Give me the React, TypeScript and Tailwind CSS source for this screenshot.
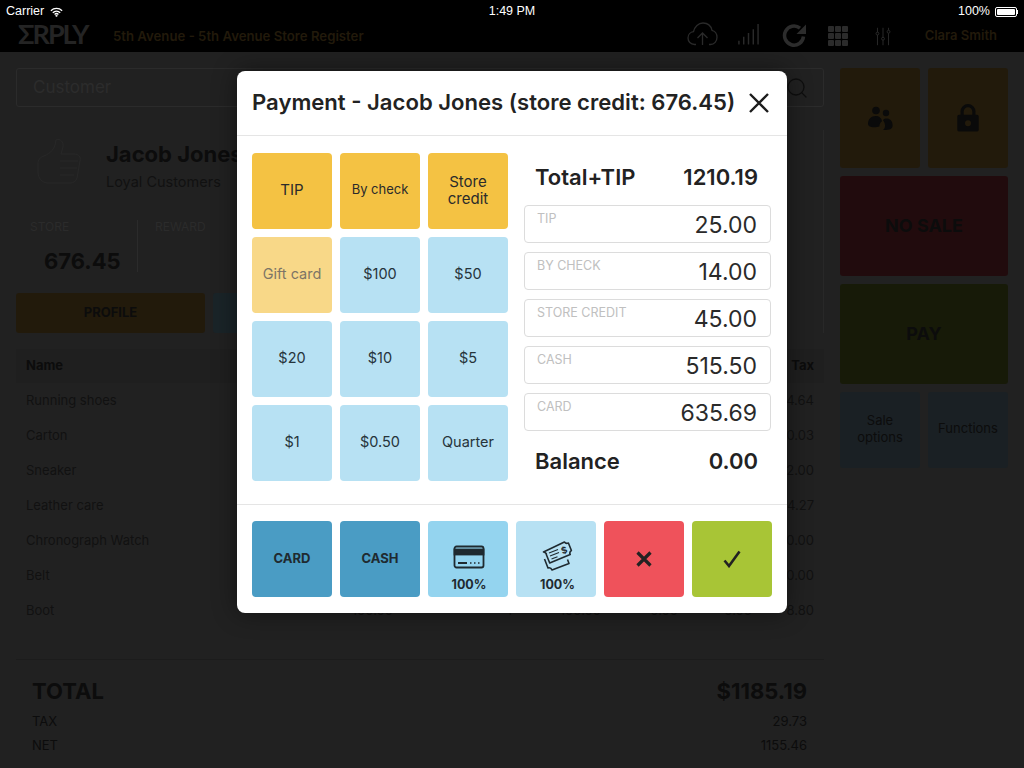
import React from "react";
import { Search } from "lucide-react";

const rows: string[][] = [
  ["Running shoes", "", "", "", "", "", "4.64"],
  ["Carton", "", "", "", "", "", "0.03"],
  ["Sneaker", "", "", "", "", "", "2.00"],
  ["Leather care", "", "", "", "", "", "4.27"],
  ["Chronograph Watch", "", "", "", "", "", "0.00"],
  ["Belt", "", "", "", "", "", "0.00"],
  ["Boot", "100.00", "1", "100.00", "0.00", "0.00", "8.80"],
];

const payButtons: [string, string][] = [
  ["TIP", "bg-[#f4c243] text-[#2b2b2b] text-[15px]"],
  ["By check", "bg-[#f4c243] text-[#2b2b2b] text-[13px]"],
  ["Store credit", "bg-[#f4c243] text-[#2b2b2b] text-[15px] leading-[17px] px-4"],
  ["Gift card", "bg-[#f8d888] text-[#7d7566] text-[14.500px]"],
  ["$100", "bg-[#b7e1f3] text-[#26343b] text-[14.500px]"],
  ["$50", "bg-[#b7e1f3] text-[#26343b] text-[14.500px]"],
  ["$20", "bg-[#b7e1f3] text-[#26343b] text-[14.500px]"],
  ["$10", "bg-[#b7e1f3] text-[#26343b] text-[14.500px]"],
  ["$5", "bg-[#b7e1f3] text-[#26343b] text-[14.500px]"],
  ["$1", "bg-[#b7e1f3] text-[#26343b] text-[14.500px]"],
  ["$0.50", "bg-[#b7e1f3] text-[#26343b] text-[14.500px]"],
  ["Quarter", "bg-[#b7e1f3] text-[#26343b] text-[14.500px]"],
];

const fields = [
  ["TIP", "25.00"],
  ["BY CHECK", "14.00"],
  ["STORE CREDIT", "45.00"],
  ["CASH", "515.50"],
  ["CARD", "635.69"],
];

function CardIcon() {
  return (
    <svg width="32" height="24" viewBox="0 0 32 24" fill="none" stroke="#1f2a30" strokeWidth="1.800">
      <rect x="1.500" y="1.500" width="29" height="21" rx="2" />
      <rect x="1.500" y="4.500" width="29" height="5" fill="#1f2a30" />
      <path d="M5 18h9" strokeWidth="2" />
      <path d="M17 18h1.500M21 18h1.500M25 18h1.500" strokeWidth="1.600" />
    </svg>
  );
}

function TicketIcon() {
  return (
    <svg width="32" height="32" viewBox="0 0 32 32" fill="none" stroke="#1f2a30" strokeWidth="1.600" strokeLinejoin="round">
      <path d="M2.500 18l3.500 9c2-.6 3.200 0 4 2l17-6.500-1.500-4" />
      <path d="M1.500 11c2 .2 3 1.200 3 3l3.200 8 20.500-8.500c-.8-1.700-.4-3 1.200-4l-3-7.500c-1.800.8-3 .4-4-1z" fill="#b7e1f3" />
      <path d="M7 12l9-3.500M8 15l9-3.500M9.500 18l6-2.300" strokeWidth="1.100" />
      <text x="19.500" y="12.500" fontSize="9" fontWeight="700" fill="#1f2a30" stroke="none" fontFamily="Inter, sans-serif" transform="rotate(-20 22 10)">$</text>
    </svg>
  );
}

function People() {
  return (
    <svg width="28" height="28" viewBox="0 0 28 28" fill="#0a0a0a">
      <circle cx="10" cy="6.500" r="3.800" />
      <circle cx="20" cy="9" r="3.200" />
      <path d="M2 20c0-5 3.200-8 7.600-8 3.600 0 6 2 6.400 5.200-1.800 1.200-2.600 3-2.600 5.200-2.500 1-8 1-9.600 0C2.600 21.800 2 21 2 20z" />
      <path d="M17 26c2-1.500 2.400-4 1.800-6.300-.4-1.600-1-2.700-1.800-3.500 1-1.200 2.200-1.600 3.600-1.600 3.400 0 6 2.600 6 6.800 0 3-2 4.600-9.600 4.600z" />
    </svg>
  );
}

function Lock() {
  return (
    <svg width="28" height="30" viewBox="0 0 26 28" fill="#0a0a0a">
      <path fillRule="evenodd" d="M6 11V8a7 7 0 0 1 14 0v3h1.500a1.500 1.500 0 0 1 1.500 1.500V25a1.500 1.500 0 0 1-1.500 1.500h-17A1.500 1.500 0 0 1 3 25V12.500A1.500 1.500 0 0 1 4.500 11zm3 0h8V8a4 4 0 0 0-8 0zm4 5a2.800 2.800 0 1 0 0 5.600 2.800 2.800 0 0 0 0-5.600z" />
    </svg>
  );
}

export default function App() {
  return (
    <div className="relative w-[1024px] h-[768px] overflow-hidden bg-[#212121] font-['Inter',sans-serif] text-[#0c0c0c]">
      <header className="bg-black h-[52px] flex flex-col">
        <div className="h-[22px] shrink-0 flex items-center justify-between px-[6px] pt-[1px] text-white text-[12.500px] font-['Liberation_Sans',sans-serif]">
          <div className="w-[200px] flex items-center gap-[6px]">
            <span>Carrier</span>
            <svg width="13" height="10" viewBox="0 0 15 11" fill="none" stroke="#fff" strokeWidth="1.500">
              <path d="M1 4a9.500 9.500 0 0 1 13 0M3.200 6.300a6.300 6.300 0 0 1 8.600 0M5.300 8.300a3.200 3.200 0 0 1 4.400 0" />
              <circle cx="7.500" cy="9.800" r="0.500" fill="#fff" />
            </svg>
          </div>
          <span>1:49 PM</span>
          <div className="w-[200px] flex items-center justify-end gap-[5px]">
            <span>100%</span>
            <div className="flex items-center">
              <div className="w-[22px] h-[10px] border border-white rounded-[2px] p-[1px]">
                <div className="w-full h-full bg-white rounded-[1px]" />
              </div>
              <div className="w-[1px] h-[4px] bg-white" />
            </div>
          </div>
        </div>
        <div className="flex-1 flex items-center pl-[18px] pr-[27px] min-h-0">
          <span className="w-[95px] text-[#242424] text-[27px] leading-none tracking-[-2px] mt-[-7px] font-['Lato',sans-serif] font-bold">ΣRPLY</span>
          <span className="text-[#221a0b] text-[13.200px] font-semibold">5th Avenue - 5th Avenue Store Register</span>
          <div className="ml-auto flex items-center mt-[-6px]">
            <svg width="31" height="24" viewBox="0 0 31 24" fill="none" stroke="#2a2a2a" strokeWidth="1.300" className="mr-[19px]">
              <path d="M9 22.500H7.500C3.500 22.500 1 19.500 1 16c0-3.500 2.500-6 5.500-6.300C7.500 4.500 11.500 1 16 1c4.500 0 8 3 9 7.300 2.800.6 5 3.500 5 7 0 4-2.700 7.200-6.500 7.200H22" />
              <path d="M15.500 23V11M10.500 16l5-5 5 5" />
            </svg>
            <svg width="23" height="22" viewBox="0 0 24 23" stroke="#2a2a2a" strokeWidth="1.500" className="mr-[22px]">
              <path d="M2 22.500v-4M7 22.500v-8M12 22.500v-12M17 22.500v-16M22 22.500V1" />
            </svg>
            <svg width="26" height="26" viewBox="0 0 26 26" fill="none" stroke="#2c2c2c" strokeWidth="3.500" className="mt-[4px] mr-[20px]">
              <path d="M21.500 13.500A9.500 9.500 0 1 1 18 5.200" />
              <path d="M24 1.500V11h-9.500z" fill="#2c2c2c" stroke="none" />
            </svg>
            <div className="grid grid-cols-3 gap-[1px] w-[20px] mt-[4px] mr-[26px]">
              {Array.from({ length: 9 }).map((_, i) => (
                <div key={i} className="h-[6px] bg-[#2b2b2b] rounded-[1px]" />
              ))}
            </div>
            <svg width="18" height="19" viewBox="0 0 20 24" fill="none" stroke="#2a2a2a" strokeWidth="1.200" className="mt-[4px] mr-[33px]">
              <path d="M3 1v5.500M3 10v13M10 1v12M10 16.500V23M17 1v3M17 8v15" />
              <circle cx="3" cy="8.300" r="1.800" />
              <circle cx="10" cy="14.800" r="1.800" />
              <circle cx="17" cy="6" r="1.800" />
            </svg>
            <span className="text-[#221a0b] text-[13px] font-semibold mt-[3px]">Clara Smith</span>
          </div>
        </div>
      </header>

      <div className="flex gap-4 px-4 pt-4">
        <main className="w-[808px]">
          <div className="h-[39px] border border-[#2b2b2b] rounded-[3px] flex items-center justify-between pl-4 pr-[14px] text-[17px] text-[#2c2c2c]">
            <span className="mt-[1px]">Customer</span>
            <Search size={24} strokeWidth={1.300} color="#0e0e0e" />
          </div>

          <section className="relative mt-[23px] h-[203px] border-r border-[#282828]">
            <div className="flex pt-[8px] pl-[20px]">
              <svg width="48" height="48" viewBox="0 0 48 48" fill="none" stroke="#282828" strokeWidth="1">
                <path d="M2 26c0-4 2-7 6-8 7-3 11-7 12-16 4-2 8 2 7 7l-2 7h13c5 0 7 3 6 7l-3 17c-1 3-3 5-7 5H12C6 45 2 40 2 34z" />
                <path d="M24 23h18M24 30h17M24 37h14" />
              </svg>
              <div className="ml-[22px] mt-[2px]">
                <div className="text-[22px] font-bold leading-[28px]">Jacob Jones</div>
                <div className="text-[14.500px] leading-[20px] mt-[4px] text-[#111]">Loyal Customers</div>
              </div>
            </div>
            <div className="flex mt-[28px]">
              <div className="w-[122px] h-[52px] border-r border-[#2b2b2b] pl-[14px]">
                <div className="text-[12px] leading-[14px] text-[#2b2b2b]">STORE</div>
                <div className="text-[22px] font-bold leading-[30px] mt-[12px] ml-[14px]">676.45</div>
              </div>
              <div className="pl-[17px] text-[12px] leading-[14px] text-[#2b2b2b]">REWARD</div>
            </div>
            <div className="flex gap-2 mt-[21px]">
              <div className="w-[189px] h-[40px] rounded-[3px] bg-[#221a0b] flex items-center justify-center text-[13px] font-bold">PROFILE</div>
              <div className="w-[189px] h-[40px] rounded-[3px] bg-[#1a2428]" />
            </div>
          </section>

          <section className="mt-[16px]">
            <div className="h-[34px] px-[10px] flex items-center justify-between bg-[#1f1f1f] text-[13px] font-bold">
              <span>Name</span>
              <span>Tax</span>
            </div>
            {rows.map((r) => (
              <div key={r[0]} className="h-[35px] px-[10px] grid grid-cols-[150px_217px_119px_89px_77px_74px_62px] items-center text-right text-[13px] text-[#111]">
                {r.map((c, i) => (
                  <span key={i} className={i === 0 ? "text-left" : ""}>{c}</span>
                ))}
              </div>
            ))}
          </section>

          <section className="mt-[31px] border-t border-[#1c1c1c] pl-4 pr-[17px] pt-[17px]">
            <div className="flex justify-between text-[22px] font-bold leading-[28px]">
              <span>TOTAL</span>
              <span>$1185.19</span>
            </div>
            <div className="flex justify-between text-[13px] leading-[24px] mt-[4px]">
              <span>TAX</span>
              <span>29.73</span>
            </div>
            <div className="flex justify-between text-[13px] leading-[24px]">
              <span>NET</span>
              <span>1155.46</span>
            </div>
          </section>
        </main>

        <aside className="w-[168px] grid grid-cols-2 gap-2 content-start">
          <div className="h-[100px] rounded-[3px] bg-[#221a0b] flex items-center justify-center"><People /></div>
          <div className="h-[100px] rounded-[3px] bg-[#221a0b] flex items-center justify-center"><Lock /></div>
          <div className="col-span-2 h-[100px] pb-[2px] rounded-[3px] bg-[#210b0d] flex items-center justify-center text-[18px] font-bold">NO SALE</div>
          <div className="col-span-2 h-[100px] pb-[2px] rounded-[3px] bg-[#171a08] flex items-center justify-center text-[18px] font-bold">PAY</div>
          <div className="h-[76px] pb-[2px] rounded-[3px] bg-[#1a2024] flex items-center justify-center text-center text-[13px] leading-[17px] px-3">Sale options</div>
          <div className="h-[76px] pb-[2px] rounded-[3px] bg-[#1a2024] flex items-center justify-center text-[13px]">Functions</div>
        </aside>
      </div>

      <div className="absolute left-[237px] top-[71px] w-[550px] h-[542px] bg-white rounded-[8px] shadow-[0_0_24px_rgba(0,0,0,0.45)] text-[#222]">
        <div className="h-[65px] border-b border-[#e5e5e5] flex items-center justify-between pl-[15px] pr-[17px]">
          <span className="text-[22.100px] font-semibold whitespace-nowrap">Payment - Jacob Jones (store credit: 676.45)</span>
          <svg width="22" height="22" viewBox="0 0 22 22" stroke="#1c1c1c" strokeWidth="2.400">
            <path d="M2 2l18 18M20 2L2 20" />
          </svg>
        </div>
        <div className="h-[369px] border-b border-[#e5e5e5] flex pl-[15px] pt-[17px]">
          <div className="w-[256px] grid grid-cols-3 gap-2 auto-rows-[76px]">
            {payButtons.map(([t, cls]) => (
              <div key={t} className={`rounded-[4px] pb-[2px] flex items-center justify-center text-center ${cls}`}>{t}</div>
            ))}
          </div>
          <div className="w-[247px] ml-[16px]">
            <div className="h-[52px] pb-[4px] flex items-center justify-between pl-[11px] pr-[13px] text-[22px] font-semibold">
              <span>Total+TIP</span>
              <span>1210.19</span>
            </div>
            <div className="flex flex-col gap-[9px]">
              {fields.map(([l, v]) => (
                <div key={l} className="h-[38px] border border-[#dcdcdc] rounded-[4px] flex justify-between pl-[12px] pr-[13px]">
                  <span className="text-[12.500px] leading-[14px] mt-[6px] text-[#c0c0c0]">{l}</span>
                  <span className="text-[23px] leading-[38px] text-[#2a2a2a]">{v}</span>
                </div>
              ))}
            </div>
            <div className="h-[50px] mt-[5px] flex items-center justify-between pl-[11px] pr-[13px] text-[22px] font-semibold">
              <span>Balance</span>
              <span>0.00</span>
            </div>
          </div>
        </div>
        <div className="flex gap-2 pl-[15px] pt-[16px]">
          <div className="w-[80px] h-[76px] rounded-[4px] bg-[#4a9cc4] flex items-center justify-center text-[13px] font-bold text-[#1f2a30]">CARD</div>
          <div className="w-[80px] h-[76px] rounded-[4px] bg-[#4a9cc4] flex items-center justify-center text-[13px] font-bold text-[#1f2a30]">CASH</div>
          <div className="w-[80px] h-[76px] rounded-[4px] bg-[#94d4ef] flex flex-col items-center pl-[2px] pt-[24px] text-[12.500px] font-bold text-[#1f2a30]">
            <CardIcon />
            <span className="leading-[16px] mt-[8px]">100%</span>
          </div>
          <div className="w-[80px] h-[76px] rounded-[4px] bg-[#b7e1f3] flex flex-col items-center pl-[3px] pt-[20px] text-[12.500px] font-bold text-[#1f2a30]">
            <TicketIcon />
            <span className="leading-[16px] mt-[4px]">100%</span>
          </div>
          <div className="w-[80px] h-[76px] rounded-[4px] bg-[#ef525b] flex items-center justify-center">
            <svg width="16" height="16" viewBox="0 0 16 16" stroke="#222" strokeWidth="3.200"><path d="M1.500 1.500l13 13M14.500 1.500l-13 13" /></svg>
          </div>
          <div className="w-[80px] h-[76px] rounded-[4px] bg-[#a8c536] flex items-center justify-center">
            <svg width="18" height="18" viewBox="0 0 18 18" fill="none" stroke="#222" strokeWidth="2.600"><path d="M1.500 10.500l4.500 5.500L16.500 1.500" /></svg>
          </div>
        </div>
      </div>
    </div>
  );
}
